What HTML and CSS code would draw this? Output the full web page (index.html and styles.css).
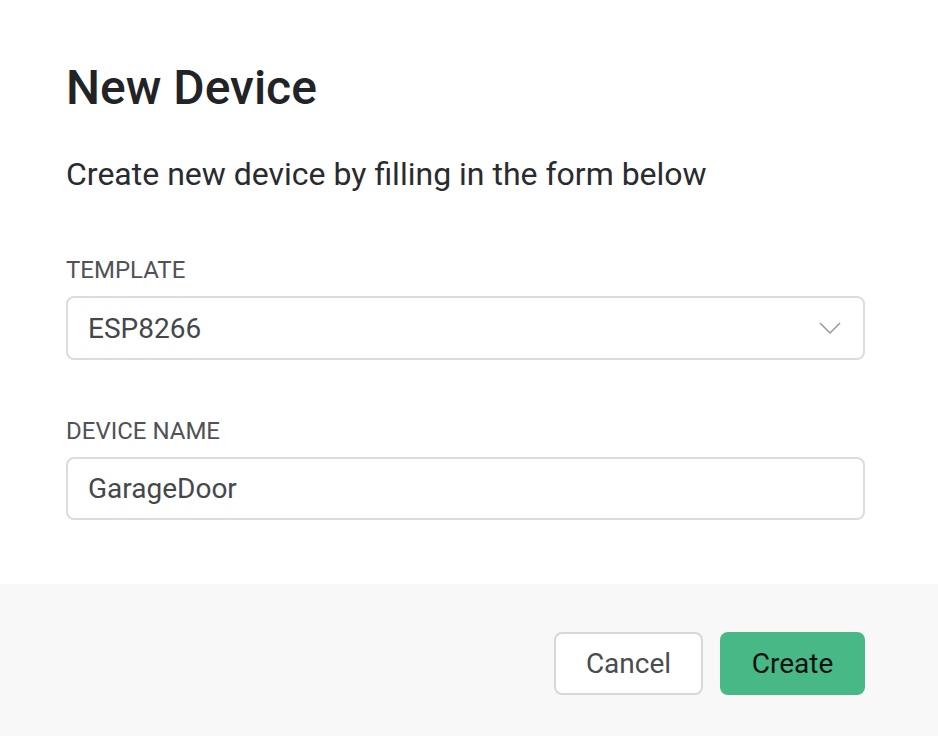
FILE: index.html
```html
<!DOCTYPE html>
<html lang="en">
<head>
<meta charset="utf-8">
<title>New Device</title>
<link rel="stylesheet" href="styles.css">
</head>
<body>
<div class="dialog">
  <div class="content">
    <h1 class="title">New Device</h1>
    <p class="subtitle">Create new device by filling in the form below</p>
    <div class="field">
      <div class="label">TEMPLATE</div>
      <div class="input select">
        <span class="value">ESP8266</span>
        <svg class="chevron" width="22" height="12" viewBox="0 0 22 12"><path d="M1 1 L11 11 L21 1" fill="none" stroke="#9a9a9a" stroke-width="1.5"/></svg>
      </div>
    </div>
    <div class="field field-second">
      <div class="label">DEVICE NAME</div>
      <div class="input">
        <span class="value">GarageDoor</span>
      </div>
    </div>
  </div>
  <div class="footer">
    <button class="btn btn-cancel">Cancel</button>
    <button class="btn btn-create">Create</button>
  </div>
</div>
</body>
</html>
```
FILE: styles.css
```css
html, body {
  margin: 0;
  padding: 0;
  background: #ffffff;
}
body {
  font-family: Roboto, "Liberation Sans", sans-serif;
  width: 938px;
  height: 736px;
  overflow: hidden;
}
.dialog {
  display: flex;
  flex-direction: column;
  height: 736px;
}
.content {
  padding: 60px 73px 64px 66px;
}
.title {
  margin: 0;
  font-size: 48px;
  line-height: 56px;
  font-weight: 500;
  color: #222326;
}
.subtitle {
  margin: 38px 0 0 0;
  font-size: 32px;
  line-height: 40px;
  color: #2a2b2e;
}
.field {
  margin-top: 62px;
}
.field-second {
  margin-top: 57px;
}
.label {
  font-size: 24px;
  line-height: 28px;
  color: #505257;
  margin-bottom: 12px;
}
.input {
  box-sizing: border-box;
  height: 64px;
  border: 2px solid #dcdcdc;
  border-radius: 8px;
  display: flex;
  align-items: center;
  justify-content: space-between;
  padding: 0 22px 0 20px;
}
.field-second .input {
  height: 63px;
}
.value {
  font-size: 28px;
  color: #45474c;
}
.chevron {
  display: block;
}
.footer {
  flex: 1;
  background: #f8f8f8;
  display: flex;
  justify-content: flex-end;
  align-items: flex-start;
  gap: 17px;
  padding: 48px 73px 0 0;
}
.btn {
  font-family: Roboto, "Liberation Sans", sans-serif;
  font-size: 28px;
  height: 63px;
  border-radius: 8px;
  cursor: pointer;
}
.btn-cancel {
  width: 149px;
  background: #ffffff;
  border: 2px solid #d8d8d8;
  color: #4a4c50;
}
.btn-create {
  width: 145px;
  background: #48b887;
  border: none;
  color: #111111;
}
```
